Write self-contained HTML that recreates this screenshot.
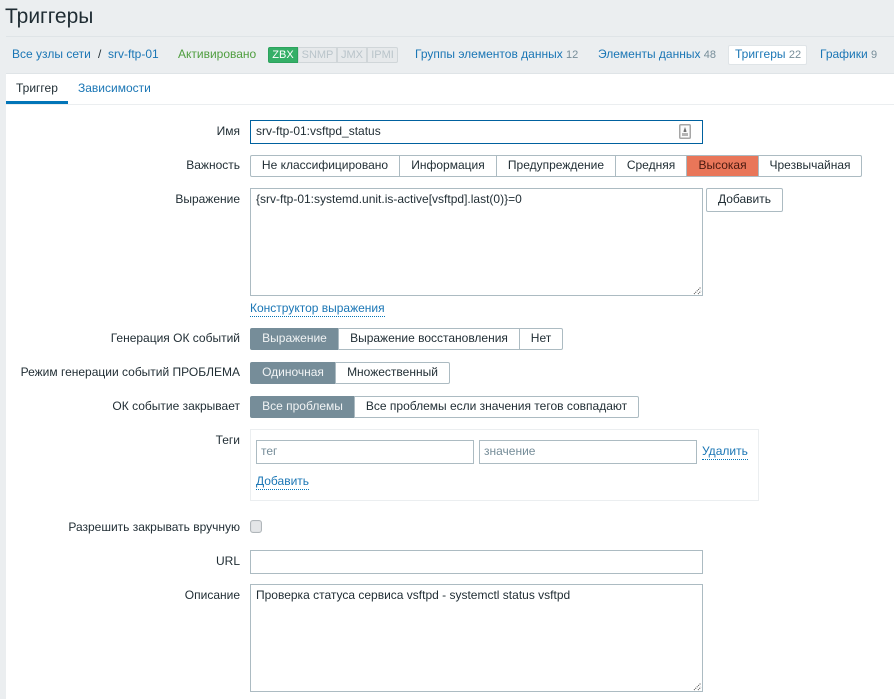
<!DOCTYPE html>
<html lang="ru">
<head>
<meta charset="utf-8">
<title>Триггеры</title>
<style>
*{box-sizing:border-box}
html,body{margin:0;padding:0;width:894px;height:699px;overflow:hidden;background:#ebeef0;font-family:"Liberation Sans",Arial,sans-serif;font-size:12px;color:#1f2c33}
.a{position:absolute;white-space:nowrap}
a,.l{color:#1a76b5;text-decoration:none}
.g{color:#768d99}
.lb{position:absolute;right:654px;white-space:nowrap;line-height:14px;text-align:right}
.box{position:absolute;background:#fff;border:1px solid #acbbc2}
.seg{position:absolute;height:22px;background:#fff;border:1px solid #acbbc2;text-align:center;line-height:19px;white-space:nowrap}
.seg.on{background:#768d99;border-color:#768d99;color:#f0f3f4}
.seg.hi{background:#e97659;color:#4a1a10;border-color:#acbbc2}
.first{border-radius:2px 0 0 2px}
.last{border-radius:0 2px 2px 0}
.dot{border-bottom:1px dotted #0275b8;line-height:14px;height:16px}
.ph{color:#768d99}
.b{position:absolute;top:47px;height:16px;font-size:11px;line-height:14px;text-align:center;border:1px solid #d0d6d9;color:#b9c4ca;background:#e6e9eb}
.grip{position:absolute;width:10px;height:10px}
</style>
</head>
<body>
<div class="a" style="left:5px;top:4px;font-size:21px;line-height:26px;color:#1f2c33">Триггеры</div>
<div class="a" style="left:6px;right:0;top:36px;height:1px;background:#dfe4e7"></div>

<a class="a" style="left:12px;top:47px;line-height:14px">Все узлы сети</a>
<span class="a" style="left:98px;top:47px;line-height:14px">/</span>
<a class="a" style="left:108px;top:47px;line-height:14px">srv-ftp-01</a>
<span class="a" style="left:178px;top:47px;line-height:14px;color:#4f9e3f">Активировано</span>

<div class="b" style="left:268px;width:30px;background:#34af67;border-color:#2ca25d;color:#fff;border-radius:2px 0 0 2px">ZBX</div>
<div class="b" style="left:298px;width:39px">SNMP</div>
<div class="b" style="left:337px;width:30px">JMX</div>
<div class="b" style="left:367px;width:31px;border-radius:0 2px 2px 0">IPMI</div>

<a class="a" style="left:415px;top:47px;line-height:14px">Группы элементов данных <span class="g" style="font-size:11px">12</span></a>
<a class="a" style="left:598px;top:47px;line-height:14px">Элементы данных <span class="g" style="font-size:11px">48</span></a>
<div class="a" style="left:728px;top:45px;width:79px;height:20px;background:#fff;border:1px solid #dfe4e7;border-radius:2px"></div>
<a class="a" style="left:735px;top:47px;line-height:14px">Триггеры <span class="g" style="font-size:11px">22</span></a>
<a class="a" style="left:820px;top:47px;line-height:14px">Графики <span class="g" style="font-size:11px">9</span></a>

<div class="a" style="left:6px;right:0;top:73px;height:626px;background:#fff;border-top:1px solid #dfe4e7"></div>
<div class="a" style="left:6px;right:0;top:104px;height:1px;background:#ebeef0"></div>
<div class="a" style="left:6px;top:101px;width:62px;height:3px;background:#0275b8"></div>
<span class="a" style="left:16px;top:81px;line-height:14px">Триггер</span>
<a class="a" style="left:78px;top:81px;line-height:14px">Зависимости</a>

<div class="lb" style="top:124px">Имя</div>
<div class="box" style="left:250px;top:120px;width:453px;height:24px;border-color:#00619f"></div>
<span class="a" style="left:256px;top:124px;line-height:14px">srv-ftp-01:vsftpd_status</span>
<svg class="a" style="left:679px;top:124px" width="12" height="15" viewBox="0 0 12 15">
<rect x="0.75" y="0.75" width="10.5" height="13.5" rx="1" fill="#fafafa" stroke="#a6a6a6" stroke-width="1.5"/>
<path d="M6 3 L7.4 7 L7.4 8 L4.6 8 L4.6 7 Z" fill="#707070"/>
<rect x="3" y="9" width="6" height="3" fill="#b4b4b4"/>
</svg>

<div class="lb" style="top:158px">Важность</div>
<div class="seg first" style="left:250px;top:155px;width:150px">Не классифицировано</div>
<div class="seg" style="left:399px;top:155px;width:98px">Информация</div>
<div class="seg" style="left:496px;top:155px;width:120px">Предупреждение</div>
<div class="seg" style="left:615px;top:155px;width:72px">Средняя</div>
<div class="seg hi" style="left:686px;top:155px;width:73px">Высокая</div>
<div class="seg last" style="left:758px;top:155px;width:104px">Чрезвычайная</div>

<div class="lb" style="top:192px">Выражение</div>
<div class="box" style="left:250px;top:188px;width:453px;height:108px"></div>
<span class="a" style="left:256px;top:192px;line-height:14px">{srv-ftp-01:systemd.unit.is-active[vsftpd].last(0)}=0</span>
<svg class="grip" style="left:693px;top:286px" viewBox="0 0 10 10"><path d="M1 8 L8 1 M5 8 L8 5" stroke="#444" stroke-width="1" stroke-dasharray="1 1" fill="none"/></svg>
<div class="a" style="left:706px;top:188px;width:77px;height:24px;border:1px solid #acbbc2;border-radius:2px;background:#fff;text-align:center;line-height:21px">Добавить</div>
<a class="a dot" style="left:250px;top:301px">Конструктор выражения</a>

<div class="lb" style="top:331px">Генерация ОК событий</div>
<div class="seg on first" style="left:250px;top:328px;width:89px">Выражение</div>
<div class="seg" style="left:338px;top:328px;width:182px">Выражение восстановления</div>
<div class="seg last" style="left:519px;top:328px;width:44px">Нет</div>

<div class="lb" style="top:365px">Режим генерации событий ПРОБЛЕМА</div>
<div class="seg on first" style="left:250px;top:362px;width:86px">Одиночная</div>
<div class="seg last" style="left:335px;top:362px;width:115px">Множественный</div>

<div class="lb" style="top:399px">ОК событие закрывает</div>
<div class="seg on first" style="left:250px;top:396px;width:105px">Все проблемы</div>
<div class="seg last" style="left:354px;top:396px;width:285px">Все проблемы если значения тегов совпадают</div>

<div class="lb" style="top:433px">Теги</div>
<div class="a" style="left:250px;top:429px;width:509px;height:72px;border:1px solid #ebeef0;background:#fff"></div>
<div class="box" style="left:256px;top:440px;width:218px;height:24px"></div>
<span class="a ph" style="left:261px;top:444px;line-height:14px">тег</span>
<div class="box" style="left:479px;top:440px;width:218px;height:24px"></div>
<span class="a ph" style="left:484px;top:444px;line-height:14px">значение</span>
<a class="a dot" style="left:702px;top:444px">Удалить</a>
<a class="a dot" style="left:256px;top:474px">Добавить</a>

<div class="lb" style="top:520px">Разрешить закрывать вручную</div>
<div class="a" style="left:250px;top:520px;width:12px;height:13px;border:1px solid #b0b6ba;border-radius:3px;background:#e4e6e8;box-shadow:inset 0 0 1px #c4c8ca"></div>

<div class="lb" style="top:554px">URL</div>
<div class="box" style="left:250px;top:550px;width:453px;height:24px"></div>

<div class="lb" style="top:588px">Описание</div>
<div class="box" style="left:250px;top:584px;width:453px;height:108px"></div>
<span class="a" style="left:256px;top:588px;line-height:14px">Проверка статуса сервиса vsftpd - systemctl status vsftpd</span>
<svg class="grip" style="left:693px;top:682px" viewBox="0 0 10 10"><path d="M1 8 L8 1 M5 8 L8 5" stroke="#444" stroke-width="1" stroke-dasharray="1 1" fill="none"/></svg>
</body>
</html>
